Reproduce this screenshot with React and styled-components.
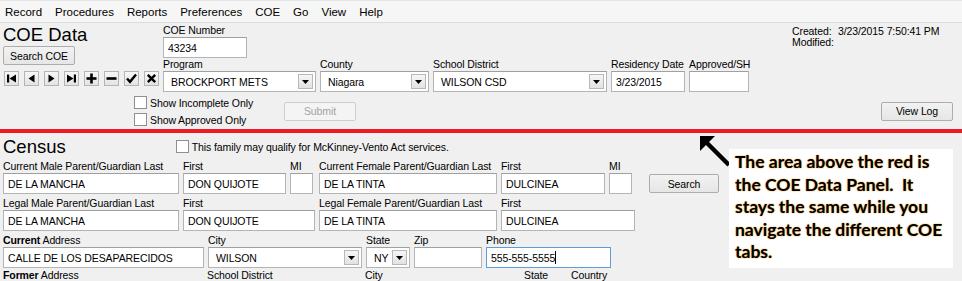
import React from "react";
import styled, { createGlobalStyle } from "styled-components";

const GlobalStyle = createGlobalStyle`
  body {
    margin: 0;
    background: #f0f0f0;
    font-family: "Liberation Sans", Arial, sans-serif;
    font-size: 10.5px;
    letter-spacing: -0.1px;
    color: #000;
  }
`;

function NavIcon({ kind }) {
  const paths = {
    first: (
      <>
        <rect x="1" y="1.5" width="2.2" height="8" />
        <polygon points="10,1.5 10,9.5 3.5,5.5" />
      </>
    ),
    prev: <polygon points="8.5,1.5 8.5,9.5 2.5,5.5" />,
    next: <polygon points="2.5,1.5 2.5,9.5 8.5,5.5" />,
    last: (
      <>
        <polygon points="1,1.5 1,9.5 7.5,5.5" />
        <rect x="7.8" y="1.5" width="2.2" height="8" />
      </>
    ),
    add: (
      <>
        <rect x="0.5" y="4.2" width="10" height="2.6" />
        <rect x="4.2" y="0.5" width="2.6" height="10" />
      </>
    ),
    remove: <rect x="0.5" y="4.2" width="10" height="2.6" />,
    ok: <polyline points="1,5.5 4,8.8 10,1.5" fill="none" stroke="#000" strokeWidth="2.4" />,
    cancel: (
      <path d="M1.8 1.8 L9.2 9.2 M9.2 1.8 L1.8 9.2" stroke="#000" strokeWidth="2.4" fill="none" />
    ),
  };
  return (
    <svg width="11" height="11" viewBox="0 0 11 11" fill="#000">
      {paths[kind]}
    </svg>
  );
}

function DropIcon() {
  return (
    <svg width="7" height="4" viewBox="0 0 7 4">
      <polygon points="0,0 7,0 3.5,4" fill="#000" />
    </svg>
  );
}

function Field({ label, value, width, select, focus, mr }) {
  return (
    <FieldBox $w={width} $mr={mr || 0}>
      <Label>{label}</Label>
      {select ? (
        <SelectBox>
          <span>{value}</span>
          <DropButton>
            <DropIcon />
          </DropButton>
        </SelectBox>
      ) : (
        <InputBox $focus={focus}>
          {value}
          {focus && <Caret />}
        </InputBox>
      )}
    </FieldBox>
  );
}

export default function App() {
  const menus = ["Record", "Procedures", "Reports", "Preferences", "COE", "Go", "View", "Help"];
  const navs = ["first", "prev", "next", "last", "add", "remove", "ok", "cancel"];

  return (
    <Window>
      <GlobalStyle />
      <MenuBar>
        {menus.map(m => (
          <MenuItem key={m}>{m}</MenuItem>
        ))}
      </MenuBar>

      <TopPanel>
        <TopRow>
          <LeftBlock>
            <Title>COE Data</Title>
            <Button $w={72}>Search COE</Button>
            <NavRow>
              {navs.map(n => (
                <NavButton key={n}>
                  <NavIcon kind={n} />
                </NavButton>
              ))}
            </NavRow>
          </LeftBlock>

          <FieldsBlock>
            <Field label="COE Number" value="43234" width={84} />
            <Row>
              <Field label="Program" value="BROCKPORT METS" width={153} select />
              <Field label="County" value="Niagara" width={109} select />
              <Field label="School District" value="WILSON CSD" width={174} select />
              <Field label="Residency Date" value="3/23/2015" width={74} />
              <Field label="Approved/SH" value="" width={60} />
            </Row>
          </FieldsBlock>

          <InfoBlock>
            <InfoLine>
              <InfoKey>Created:</InfoKey>
              <span>3/23/2015 7:50:41 PM</span>
            </InfoLine>
            <InfoLine>
              <InfoKey>Modified:</InfoKey>
            </InfoLine>
          </InfoBlock>
        </TopRow>

        <BottomRow>
          <CheckGroup>
            <CheckLine>
              <CheckBox />
              Show Incomplete Only
            </CheckLine>
            <CheckLine>
              <CheckBox />
              Show Approved Only
            </CheckLine>
          </CheckGroup>
          <Button $w={72} $disabled>
            Submit
          </Button>
          <Spacer />
          <Button $w={72}>View Log</Button>
        </BottomRow>
      </TopPanel>

      <RedRule />

      <Census>
        <CensusHead>
          <Title>Census</Title>
          <CheckLine>
            <CheckBox />
            This family may qualify for McKinney-Vento Act services.
          </CheckLine>
        </CensusHead>

        <Row>
          <Field label="Current Male Parent/Guardian Last" value="DE LA MANCHA" width={176} />
          <Field label="First" value="DON QUIJOTE" width={103} />
          <Field label="MI" value="" width={23} mr={2} />
          <Field label="Current Female Parent/Guardian Last" value="DE LA TINTA" width={178} />
          <Field label="First" value="DULCINEA" width={104} />
          <Field label="MI" value="" width={23} />
          <SearchWrap>
            <Button $w={70}>Search</Button>
          </SearchWrap>
        </Row>

        <Row>
          <Field label="Legal Male Parent/Guardian Last" value="DE LA MANCHA" width={176} />
          <Field label="First" value="DON QUIJOTE" width={132} />
          <Field label="Legal Female Parent/Guardian Last" value="DE LA TINTA" width={178} />
          <Field label="First" value="DULCINEA" width={134} />
        </Row>

        <Row>
          <Field
            label={
              <>
                <b>Current</b> Address
              </>
            }
            value="CALLE DE LOS DESAPARECIDOS"
            width={201}
          />
          <Field label="City" value="WILSON" width={154} select />
          <Field label="State" value="NY" width={44} select />
          <Field label="Zip" value="" width={68} />
          <Field label="Phone" value="555-555-5555" width={125} focus />
        </Row>

        <LabelRow>
          <Label style={{ width: 204 }}>
            <b>Former</b> Address
          </Label>
          <Label style={{ width: 158 }}>School District</Label>
          <Label style={{ width: 159 }}>City</Label>
          <Label style={{ width: 47 }}>State</Label>
          <Label>Country</Label>
        </LabelRow>
      </Census>

      <Arrow width="34" height="34" viewBox="0 0 34 34">
        <path d="M4 4 L30 30" stroke="#000" strokeWidth="4.5" />
        <polygon points="1,1 16,1 1,16" fill="#000" />
      </Arrow>
      <Note>
        The area above the red is the COE Data Panel.&nbsp; It stays the same while you navigate the
        different COE tabs.
      </Note>
    </Window>
  );
}

const Window = styled.div`
  position: relative;
  width: 962px;
  height: 281px;
  overflow: hidden;
  background: #f0f0f0;
`;

const MenuBar = styled.div`
  display: flex;
  align-items: center;
  height: 20px;
  padding: 1px 0 0 5px;
  background: #f6f6f6;
  border-top: 1px solid #e4e4e4;
  border-bottom: 1px solid #dcdcdc;
  font-size: 11.5px;
  letter-spacing: 0;
`;

const MenuItem = styled.div`
  margin-right: 13px;
`;

const TopPanel = styled.div`
  height: 105px;
  display: flex;
  flex-direction: column;
`;

const TopRow = styled.div`
  display: flex;
  height: 71px;
`;

const LeftBlock = styled.div`
  width: 160px;
  padding-left: 3px;
  display: flex;
  flex-direction: column;
`;

const Title = styled.div`
  font-size: 18.5px;
  letter-spacing: 0;
  line-height: 22px;
  margin-top: 1px;
`;

const Button = styled.div`
  box-sizing: border-box;
  width: ${p => p.$w}px;
  height: 19px;
  display: flex;
  align-items: center;
  justify-content: center;
  border: 1px solid ${p => (p.$disabled ? "#cfcfcf" : "#adadad")};
  border-radius: 2px;
  background: ${p =>
    p.$disabled ? "#f4f4f4" : "linear-gradient(#f2f2f2, #e6e6e6)"};
  color: ${p => (p.$disabled ? "#a3a3a3" : "#000")};
`;

const NavRow = styled.div`
  display: flex;
  gap: 5px;
  margin-top: 6px;
  padding-left: 1px;
`;

const NavButton = styled.div`
  box-sizing: border-box;
  width: 15px;
  height: 15px;
  display: flex;
  align-items: center;
  justify-content: center;
  border: 1px solid #b5b5b5;
  background: linear-gradient(#f7f7f7, #e4e4e4);
`;

const FieldsBlock = styled.div`
  display: flex;
  flex-direction: column;
  padding-top: 1px;
`;

const Row = styled.div`
  display: flex;
  gap: 4px;
`;

const FieldBox = styled.div`
  display: flex;
  flex-direction: column;
  flex: none;
  width: ${p => p.$w}px;
  margin-right: ${p => p.$mr}px;
`;

const Label = styled.div`
  height: 13px;
  line-height: 13px;
  white-space: nowrap;
  b {
    font-weight: bold;
  }
`;

const InputBox = styled.div`
  position: relative;
  box-sizing: border-box;
  height: 21px;
  padding: 0 4px;
  display: flex;
  align-items: center;
  background: #fff;
  border: 1px solid ${p => (p.$focus ? "#5a9fdc" : "#b4b4b4")};
  border-top-color: ${p => (p.$focus ? "#5a9fdc" : "#a0a0a0")};
  white-space: nowrap;
  overflow: hidden;
`;

const Caret = styled.span`
  display: inline-block;
  width: 1px;
  height: 13px;
  background: #000;
`;

const SelectBox = styled(InputBox)`
  justify-content: space-between;
  padding-right: 2px;
  span {
    padding-left: 3px;
  }
`;

const DropButton = styled.div`
  box-sizing: border-box;
  width: 15px;
  height: 15px;
  display: flex;
  align-items: center;
  justify-content: center;
  border: 1px solid #b8b8b8;
  background: linear-gradient(#f6f6f6, #e2e2e2);
`;

const InfoBlock = styled.div`
  margin-left: auto;
  width: 170px;
  padding-top: 3px;
`;

const InfoLine = styled.div`
  display: flex;
  line-height: 11px;
`;

const InfoKey = styled.span`
  width: 46px;
`;

const BottomRow = styled.div`
  display: flex;
  align-items: center;
  padding: 2px 9px 0 134px;
`;

const CheckGroup = styled.div`
  display: flex;
  flex-direction: column;
  gap: 4px;
  width: 150px;
`;

const CheckLine = styled.div`
  display: flex;
  align-items: center;
  gap: 3px;
  white-space: nowrap;
`;

const CheckBox = styled.span`
  box-sizing: border-box;
  width: 13px;
  height: 13px;
  background: #fff;
  border: 1px solid #8f8f8f;
`;

const Spacer = styled.div`
  flex: 1;
`;

const RedRule = styled.div`
  height: 4px;
  background: #ed1c24;
  margin-top: 1px;
`;

const Census = styled.div`
  padding: 3px 0 0 3px;
  display: flex;
  flex-direction: column;
  gap: 3px;
`;

const CensusHead = styled.div`
  display: flex;
  align-items: center;
  gap: 110px;
  height: 21px;
`;

const SearchWrap = styled.div`
  display: flex;
  align-items: flex-end;
  padding-left: 13px;
  padding-bottom: 1px;
`;

const LabelRow = styled.div`
  display: flex;
  margin-top: -2px;
`;

const Arrow = styled.svg`
  position: absolute;
  left: 699px;
  top: 135px;
`;

const Note = styled.div`
  position: absolute;
  left: 729px;
  top: 149px;
  width: 224px;
  height: 119px;
  box-sizing: border-box;
  padding: 2px 4px 0 6px;
  background: #fff;
  font-family: Lato, "Open Sans", sans-serif;
  font-weight: 700;
  font-size: 17.5px;
  letter-spacing: 0;
  line-height: 22.5px;
  text-shadow: 0 0 1px #e39a3c, 0 0 2px #f2c27a;
`;
